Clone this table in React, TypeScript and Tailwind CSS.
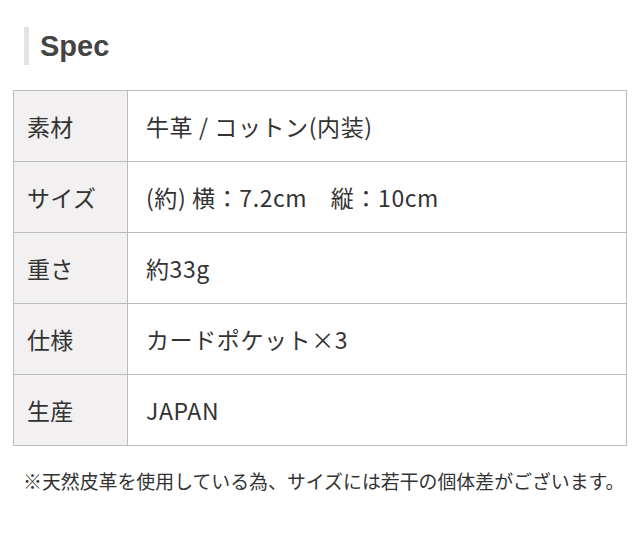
import React from "react";

const rows: [string, string][] = [
  ["素材", "牛革 / コットン(内装)"],
  ["サイズ", "(約) 横：7.2cm\u3000縦：10cm"],
  ["重さ", "約33g"],
  ["仕様", "カードポケット×3"],
  ["生産", "JAPAN"],
];

export default function App() {
  return (
    <div
      className="w-[640px] h-[537px] bg-white text-[#333]"
      style={{ fontFamily: '"Noto Sans CJK JP", "Noto Sans", sans-serif' }}
    >
      <div className="pt-[27px] pl-[24px] flex items-center h-[65px]">
        <div className="w-[5px] h-[38px] bg-[#e3e3e3]" />
        <h2
          className="ml-[11px] text-[29px] font-bold text-[#444] leading-none"
          style={{ fontFamily: '"Liberation Sans", Arial, sans-serif' }}
        >
          Spec
        </h2>
      </div>
      <div className="mt-[25px] mx-[13px] w-[614px] border border-[#bbbbbb]">
        {rows.map(([k, v], i) => (
          <div
            key={k}
            className={`flex ${i > 0 ? "h-[71px] border-t border-[#bbbbbb]" : "h-[70px]"}`}
          >
            <div className="w-[114px] bg-[#f2f0f0] border-r border-[#bbbbbb] flex items-center pl-[13px] text-[23px] tracking-[0.3px]">
              {k}
            </div>
            <div className="flex-1 flex items-center pl-[18px] text-[23px] tracking-[0.6px]">
              {v}
            </div>
          </div>
        ))}
      </div>
      <p className="mt-[26px] ml-[23px] text-[18.9px] leading-none whitespace-nowrap">
        ※天然皮革を使用している為、サイズには若干の個体差がございます。
      </p>
    </div>
  );
}
